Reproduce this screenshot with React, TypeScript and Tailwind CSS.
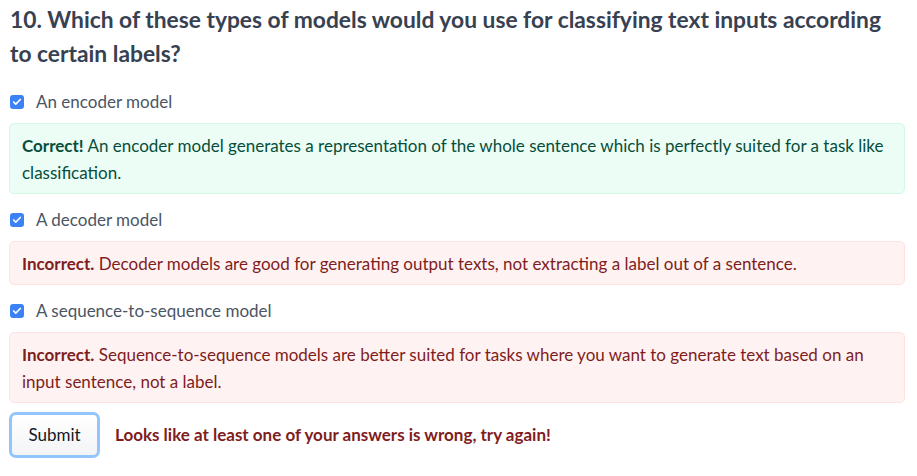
import { Check } from 'lucide-react'

type Option = {
  label: string
  correct: boolean
  lead: string
  text: string
}

const options: Option[] = [
  {
    label: 'An encoder model',
    correct: true,
    lead: 'Correct!',
    text: 'An encoder model generates a representation of the whole sentence which is perfectly suited for a task like classification.',
  },
  {
    label: 'A decoder model',
    correct: false,
    lead: 'Incorrect.',
    text: 'Decoder models are good for generating output texts, not extracting a label out of a sentence.',
  },
  {
    label: 'A sequence-to-sequence model',
    correct: false,
    lead: 'Incorrect.',
    text: 'Sequence-to-sequence models are better suited for tasks where you want to generate text based on an input sentence, not a label.',
  },
]

function Checkbox() {
  return (
    <span className="w-[14px] h-[14px] rounded-[3px] bg-[#3b82f6] flex items-center justify-center flex-shrink-0">
      <Check size={10} strokeWidth={4} className="text-white" />
    </span>
  )
}

export default function App() {
  return (
    <div
      className="w-[917px] h-[476px] bg-white overflow-hidden pl-[9px] pr-[12px] pt-[2px]"
      style={{ fontFamily: 'Lato, "Open Sans", sans-serif' }}
    >
      <h3 className="text-[22.8px] font-bold leading-[34px] text-[#374151] pl-[1px] pr-[4px]">
        10. Which of these types of models would you use for classifying text inputs according to certain labels?
      </h3>

      <div className="mt-[19px] flex flex-col">
        {options.map((o) => (
          <div key={o.label} className="flex flex-col">
            <label className="flex items-center gap-[12px] pl-[1px] h-[26px] text-[17px] text-[#4b5563]">
              <Checkbox />
              <span>{o.label}</span>
            </label>
            <div
              className={
                o.correct
                  ? 'mt-[8px] mb-[13px] rounded-[5px] border border-[#d1fae5] bg-[#ecfdf5] px-[12px] pt-[8px] pb-[7px] text-[17px] leading-[27px] text-[#064e3b]'
                  : 'mt-[8px] mb-[13px] rounded-[5px] border border-[#fee2e2] bg-[#fef2f2] px-[12px] pt-[8px] pb-[7px] text-[17px] leading-[27px] text-[#7f1d1d]'
              }
            >
              <span className="font-bold">{o.lead}</span> {o.text}
            </div>
          </div>
        ))}
      </div>

      <div className="flex items-center gap-[15px] -mt-[4px]">
        <button className="w-[91px] h-[46px] rounded-[7px] border-[3px] border-[#93c5fd] bg-gradient-to-b from-white to-[#f3f4f6] text-[17px] text-[#111827]">
          Submit
        </button>
        <span className="text-[17px] font-bold text-[#7f1d1d]">
          Looks like at least one of your answers is wrong, try again!
        </span>
      </div>
    </div>
  )
}
